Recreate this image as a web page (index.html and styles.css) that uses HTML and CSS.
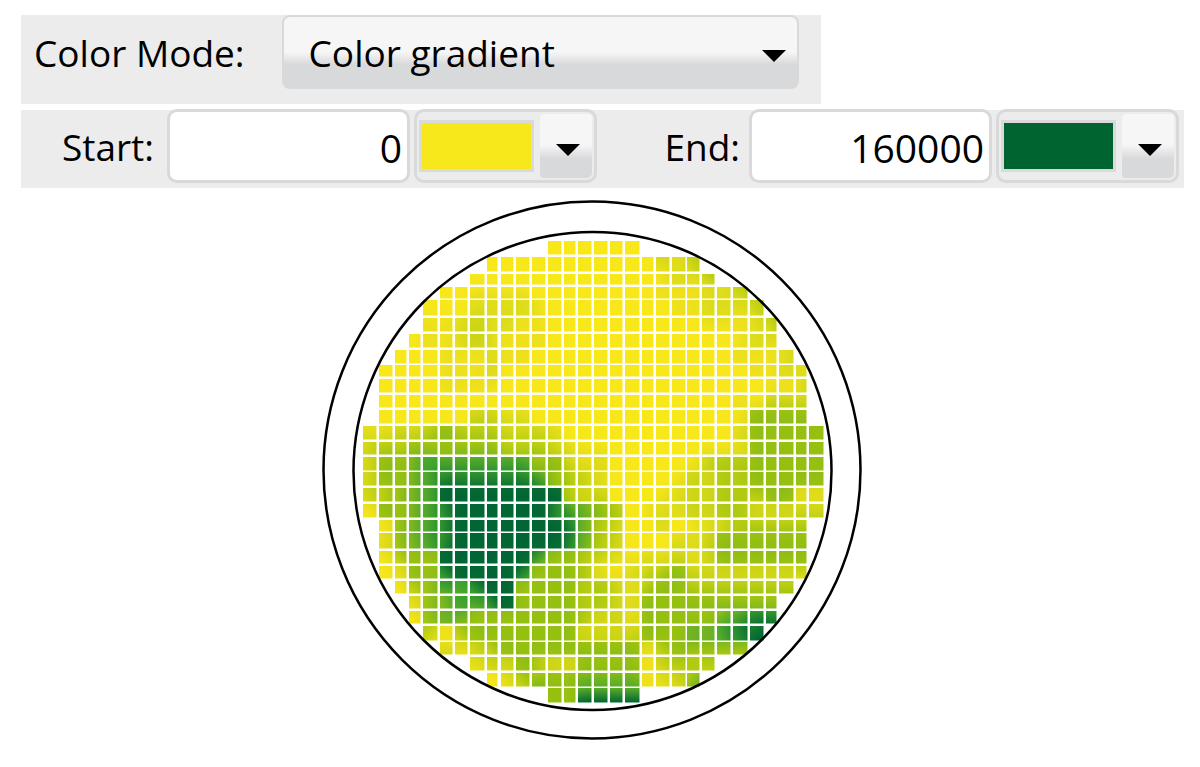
FILE: index.html
```
<!DOCTYPE html>
<html lang="en">
<head>
<meta charset="utf-8">
<title>Color Mode</title>
<link rel="stylesheet" href="styles.css">
</head>
<body>
<main class="page">
  <form class="controls">
    <div class="mode-row">
      <label class="mode-label" for="mode">Color Mode:</label>
      <div class="select-box">
        <select class="mode-select" id="mode"><option>Color gradient</option></select>
        <svg class="arrow" viewBox="0 0 24 12" aria-hidden="true"><path d="M0 0H24L12 12Z"/></svg>
      </div>
    </div>
    <div class="range-row">
      <label class="range-label" for="start">Start:</label>
      <input class="value" id="start" type="text" value="0">
      <button class="picker" type="button" aria-label="Start color">
        <span class="swatch swatch-start"></span>
        <span class="drop"><svg class="drop-arrow" viewBox="0 0 24 12" aria-hidden="true"><path d="M0 0H24L12 12Z"/></svg></span>
      </button>
      <label class="range-label range-label-end" for="end">End:</label>
      <input class="value" id="end" type="text" value="160000">
      <button class="picker" type="button" aria-label="End color">
        <span class="swatch swatch-end"></span>
        <span class="drop"><svg class="drop-arrow" viewBox="0 0 24 12" aria-hidden="true"><path d="M0 0H24L12 12Z"/></svg></span>
      </button>
    </div>
  </form>
  <div class="map-area">
    <svg class="wafer" id="wafer" viewBox="322 200 540 540" role="img" aria-label="Wafer map">
      <defs id="defs"></defs>
      <g id="cells"></g>
      <circle class="ring" cx="592" cy="470" r="268.5"/>
      <circle class="ring" cx="592.5" cy="471" r="239"/>
    </svg>
  </div>
</main>
<script src="map.js"></script>
</body>
</html>
```
FILE: styles.css
```
.page {
  padding: 15px 16px 0 21px;
}
body {
  margin: 0;
  background: #fff;
  color: #000;
  font-family: "Open Sans", "Noto Sans", sans-serif;
  font-size: 37px;
}
.controls {
  display: flex;
  flex-direction: column;
  gap: 6px;
}
.mode-row {
  box-sizing: border-box;
  display: flex;
  align-items: flex-start;
  width: 68.75%;
  height: 89px;
  padding-right: 22px;
  background: #ececec;
}
.mode-label {
  flex: 1;
  padding-left: 13px;
  line-height: 76px;
  white-space: nowrap;
}
.select-box {
  display: grid;
  flex: 0 0 517px;
  align-items: center;
}
.mode-select {
  grid-area: 1 / 1;
  width: 100%;
  height: 74px;
  padding: 0 60px 0 25px;
  border: 2px solid #d8d9da;
  border-radius: 8px;
  appearance: none;
  background: linear-gradient(#f6f6f6 50%, #d8d9db 68%);
  color: inherit;
  font: inherit;
}
.arrow {
  grid-area: 1 / 1;
  justify-self: end;
  width: 24px;
  height: 12px;
  margin: 7px 13px 0 0;
  pointer-events: none;
}
.range-row {
  display: grid;
  grid-template-columns: 146fr 243fr 4fr 183fr 152fr 243fr 4fr 183fr 5fr;
  height: 78px;
  background: #ececec;
}
.range-label {
  padding-right: 13px;
  line-height: 74px;
  text-align: right;
}
.range-label-end {
  padding-right: 9px;
}
.value {
  box-sizing: border-box;
  width: 100%;
  min-width: 0;
  height: 74px;
  margin-top: -1px;
  padding: 2px 5px 0;
  border: 3px solid #d9d9d9;
  border-radius: 10px;
  background: #fff;
  color: inherit;
  font: inherit;
  font-size: 39px;
  text-align: right;
}
.picker {
  grid-column: 4;
  box-sizing: border-box;
  display: flex;
  align-items: center;
  gap: 6px;
  height: 74px;
  margin-top: -1px;
  padding: 0 2px;
  border: 3px solid #d9d9d9;
  border-radius: 10px;
  background: #ececec;
}
#end + .picker {
  grid-column: 8;
}
.swatch {
  box-sizing: border-box;
  flex: 1;
  height: 52px;
  border: 3px solid #d8dadc;
}
.swatch-start {
  background: #f7e81b;
}
.swatch-end {
  background: #006430;
}
.drop {
  display: flex;
  flex: 0 0 52px;
  align-items: center;
  justify-content: center;
  height: 64px;
  border-radius: 4px 4px 5px 4px;
  background: linear-gradient(#f6f6f6 48%, #d8d9db 70%);
}
.drop-arrow {
  width: 24px;
  height: 12px;
  margin: 8px 0 0 4px;
}
.map-area {
  display: flex;
  justify-content: center;
  padding: 12px 21px 0 0;
}
.wafer {
  display: block;
  width: 45vw;
}
.ring {
  fill: none;
  stroke: #000;
  stroke-width: 2.5;
}
```
FILE: map.js
```
const left = [363,379,395,409,423,440,455,470,487,501,516,532,548,564,578,594,610,625,642,656,672,687,702,717,733,750,766,779,796,809];
const right = [376,392,406,420,437,452,467,484,497,513,529,545,561,575,591,607,622,639,653,669,685,699,714,730,747,763,776,793,806,823];
const top_ = [241,257,274,287,300,318,334,350,365,379,395,410,426,442,457,472,488,504,520,533,551,566,581,596,611,626,642,657,673,688];
const bottom = [254,271,284,298,315,331,347,363,376,392,407,423,439,454,470,485,501,517,531,548,563,578,593,608,623,640,654,670,686,702];

// Each row: first column, then one level (0 = start color, 9 = end color) per cell.
const rows = [
  [12, "000000"],
  [8, "00000000000223"],
  [7, "0000000000001223"],
  [5, "00111100000000111223"],
  [4, "0002222100000000112223"],
  [4, "11232211000000000011123"],
  [3, "011232111000000000000122"],
  [2, "00011121100000000000001112"],
  [1, "0000111200000000000000001122"],
  [1, "0000111100000000000000000112"],
  [1, "0000000000000000000000011333"],
  [1, "0000003322000000000000015555"],
  [0, "223345444333200000000000255555"],
  [0, "344555555444321100000011255555"],
  [0, "355677777775532200000134455555"],
  [0, "355678888887543200001334455555"],
  [0, "345679999999943300012334445522"],
  [0, "155678999999876540122334433333"],
  [1, "1567899999998764302012344444"],
  [1, "2567899999998764300223555555"],
  [1, "1455999999755432122323555555"],
  [1, "0255899998555421234533333333"],
  [2, "14577899555544324554444444"],
  [3, "256778955554432555555555"],
  [3, "156655555554332555556788"],
  [4, "3145555555333355566789"],
  [5, "22345555555552455555"],
  [7, "2335433555513444"],
  [8, "02455566661235"],
  [12, "558888"]
];
const overrides = {"18-14": 6, "18-15": 4, "18-16": 3, "18-17": 0, "18-18": 0, "18-19": 2, "18-20": 0,
  "19-14": 6, "19-15": 4, "19-16": 3, "19-17": 0, "19-18": 0, "19-19": 0, "19-20": 2};
const scale = ["#f8e81a","#eee11b","#dfdc1a","#cfd616","#b2cb11","#96c010","#70b224","#42a82c","#20842f","#006633"]
  .map(h => [1, 3, 5].map(i => parseInt(h.slice(i, i + 2), 16)));

const level = (r, c) => {
  const row = rows[r];
  const ch = row && c >= row[0] ? row[1][c - row[0]] : undefined;
  if (ch === undefined) return null;
  const fixed = overrides[r + "-" + c];
  return fixed === undefined ? +ch : fixed;
};
const color = v => {
  v = Math.max(0, Math.min(9, v));
  const i = Math.min(8, Math.floor(v));
  return "rgb(" + scale[i].map((a, k) => Math.round(a + (scale[i + 1][k] - a) * (v - i))).join(",") + ")";
};
// Slope across a cell: the gentler of the two side differences, small at a local peak.
const slope = (before, here, after) => {
  const clamp = d => Math.max(-1.2, Math.min(1.2, d));
  if (before === null && after === null) return 0;
  if (before === null) return clamp(after - here);
  if (after === null) return clamp(here - before);
  const a = here - before, b = after - here;
  return a * b <= 0 ? clamp(a + b) * 0.3 : clamp(Math.abs(a) < Math.abs(b) ? a : b);
};
const make = (name, attrs) => {
  const el = document.createElementNS("http://www.w3.org/2000/svg", name);
  for (const k in attrs) el.setAttribute(k, attrs[k]);
  return el;
};
const defs = document.getElementById("defs");
const cells = document.getElementById("cells");
rows.forEach(([first, levels], r) => {
  [...levels].forEach((ch, i) => {
    const c = first + i, v = level(r, c);
    let sx = slope(level(r, c - 1), v, level(r, c + 1));
    let sy = slope(level(r - 1, c), v, level(r + 1, c));
    if (r === 29 && v === 8) sy = 3;
    const size = Math.hypot(sx, sy);
    let fill = color(v);
    if (size > 0) {
      const dx = sx / size / 2, dy = sy / size / 2;
      const g = make("linearGradient", {id: "g" + r + "-" + c, x1: 0.5 - dx, y1: 0.5 - dy, x2: 0.5 + dx, y2: 0.5 + dy});
      g.append(make("stop", {offset: 0, "stop-color": color(v - size / 2)}), make("stop", {offset: 1, "stop-color": color(v + size / 2)}));
      defs.append(g);
      fill = "url(#g" + r + "-" + c + ")";
    }
    const x = left[c], y = top_[r];
    cells.append(make("rect", {x, y, width: right[c] - x + 0.5, height: bottom[r] - y + 0.5, fill}));
  });
});
```
